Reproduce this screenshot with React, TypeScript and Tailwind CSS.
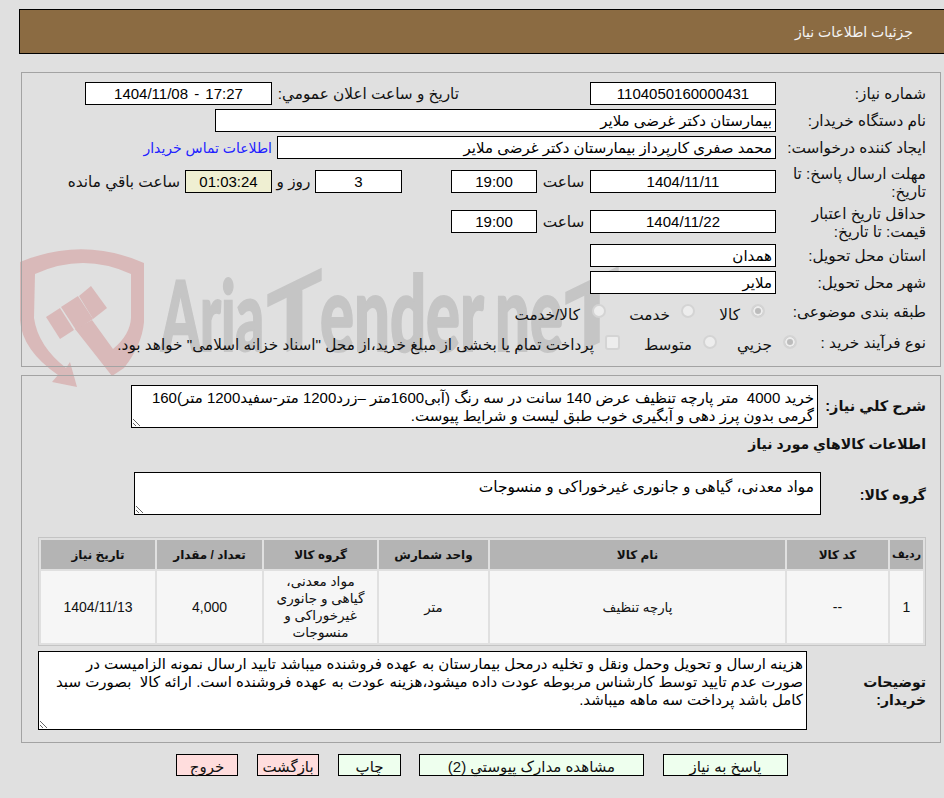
const field = 'h-[23px] shrink-0 border border-black px-[3px] text-[15px] leading-[21px] text-black outline-none';
const box = `${field} bg-white`;
const area = 'block shrink-0 resize border border-black bg-white px-[3px] leading-[18px] text-black outline-none';
const radio = 'm-0 size-[14px] shrink-0 appearance-none rounded-full border-2 border-[#d4d4d4] bg-[#ededed] checked:bg-[#bcbcbc] checked:shadow-[inset_0_0_0_2px_#ededed]';
const btn = 'h-[22px] shrink-0 border border-black text-[15px] leading-[20px] text-[#111]';
const label = 'w-[136px] shrink-0 whitespace-nowrap pt-[2px]';
const label2 = 'w-[136px] shrink-0 pt-[4px] leading-[18px]';

function Watermark() {
  return (
    <svg className="absolute left-0 top-0 z-0 [direction:ltr]" width="944" height="798" viewBox="0 0 944 798" aria-hidden="true">
      <g fill="#d9b9b9">
        <path d="M20 262 Q83 236 144 263 L144 322 Q142 345 124 368 L112 376 L75 329 L92 320 L113 349 Q130 335 131 318 L131 274 Q83 252 35 274 L34 318 Q38 346 66 368 L70 362 L77 387 L52 382 L58 375 Q22 350 20 320 Z" />
        <path d="M46 317 L60 308 L74 330 L60 339 Z" />
        <path d="M61 307 L78 296 L93 319 L76 330 Z" />
        <path d="M79 296 L91 286 L107 308 L93 319 Z" />
      </g>
      <g fill="#c5c5c5" stroke="#c5c5c5" strokeWidth="2" fontFamily="Lato, sans-serif" fontWeight="900">
        <text x="161" y="351" fontSize="98" textLength="103" lengthAdjust="spacingAndGlyphs">Aria</text>
        <text x="267" y="350" transform="skewY(-26) translate(0 141)" fontSize="90" textLength="55" lengthAdjust="spacingAndGlyphs">T</text>
        <text x="320" y="351" fontSize="104" textLength="164" lengthAdjust="spacingAndGlyphs">ender</text>
        <text x="495" y="351" fontSize="104" textLength="68" lengthAdjust="spacingAndGlyphs">ne</text>
        <text x="565" y="346" transform="skewY(-26) translate(0 288)" fontSize="90" textLength="54" lengthAdjust="spacingAndGlyphs">T</text>
      </g>
    </svg>
  );
}

function Radio({ checked }: { checked?: boolean }) {
  return <input type="radio" disabled defaultChecked={checked} className={radio} />;
}

function FormPanel() {
  return (
    <section className="mt-[18px] h-[295px] border border-[#a3a3a3] pt-[9px] pr-[14px] text-[15.3px] text-[#111]">
      <div className="flex h-[23px] items-center">
        <span className={label}>شماره نیاز:</span>
        <input readOnly value="1104050160000431" className={`${box} mr-[14px] w-[186px] text-center`} />
        <span className="mr-[131px] w-[181px] shrink-0 whitespace-nowrap pt-[2px]">تاریخ و ساعت اعلان عمومي:</span>
        <input readOnly value="1404/11/08 - 17:27" dir="ltr" className={`${box} mr-[6px] w-[187px] text-center [word-spacing:2px]`} />
      </div>
      <div className="mt-[4px] flex h-[23px] items-center">
        <span className={label}>نام دستگاه خریدار:</span>
        <input readOnly value="بیمارستان دکتر غرضی ملایر" className={`${box} mr-[14px] w-[561px]`} />
      </div>
      <div className="mt-[4px] flex h-[23px] items-center">
        <span className={label}>ایجاد کننده درخواست:</span>
        <input readOnly value="محمد صفری کارپرداز بیمارستان دکتر غرضی ملایر" className={`${box} mr-[14px] w-[499px]`} />
        <a className="mr-[5px] whitespace-nowrap pt-[2px] text-[14px] text-[#2222ff]">اطلاعات تماس خریدار</a>
      </div>
      <div className="mt-[4px] flex h-[36px] items-center">
        <span className={label2}>مهلت ارسال پاسخ: تا تاریخ:</span>
        <input readOnly value="1404/11/11" className={`${box} mr-[14px] w-[186px] text-center`} />
        <span className="w-[53px] shrink-0 pt-[2px] text-center">ساعت</span>
        <input readOnly value="19:00" className={`${box} w-[86px] text-center`} />
        <input readOnly value="3" className={`${box} mr-[49px] w-[87px] text-center`} />
        <span className="w-[43px] shrink-0 pt-[2px] text-center">روز و</span>
        <input readOnly value="01:03:24" className={`${field} w-[87px] bg-[#efefd2] text-center`} />
        <span className="mr-[5px] whitespace-nowrap pt-[2px]">ساعت باقي مانده</span>
      </div>
      <div className="mt-[4px] flex h-[36px] items-center">
        <span className={label2}>حداقل تاریخ اعتبار قیمت: تا تاریخ:</span>
        <input readOnly value="1404/11/22" className={`${box} mr-[14px] w-[186px] text-center`} />
        <span className="w-[53px] shrink-0 pt-[2px] text-center">ساعت</span>
        <input readOnly value="19:00" className={`${box} w-[86px] text-center`} />
      </div>
      <div className="mt-[5px] flex h-[23px] items-center">
        <span className={label}>استان محل تحویل:</span>
        <input readOnly value="همدان" className={`${box} mr-[14px] w-[186px]`} />
      </div>
      <div className="mt-[4px] flex h-[23px] items-center">
        <span className={label}>شهر محل تحویل:</span>
        <input readOnly value="ملایر" className={`${box} mr-[14px] w-[186px]`} />
      </div>
      <div className="mt-[6px] flex h-[22px] items-center">
        <span className={label}>طبقه بندی موضوعی:</span>
        <span className="mr-[25px] flex"><Radio checked /></span>
        <span className="mr-[11px] w-[20px] shrink-0 whitespace-nowrap pt-[8px]">کالا</span>
        <span className="mr-[25px] flex"><Radio /></span>
        <span className="mr-[11px] w-[40px] shrink-0 whitespace-nowrap pt-[8px]">خدمت</span>
        <span className="mr-[24px] flex"><Radio /></span>
        <span className="mr-[12px] whitespace-nowrap pt-[8px]">کالا/خدمت</span>
      </div>
      <div className="mt-[9px] flex h-[22px] items-center">
        <span className="w-[129px] shrink-0 whitespace-nowrap pt-[2px]">نوع فرآیند خرید :</span>
        <span className="flex"><Radio checked /></span>
        <span className="mr-[11px] w-[35px] shrink-0 whitespace-nowrap pt-[6px]">جزيي</span>
        <span className="mr-[20px] flex"><Radio /></span>
        <span className="mr-[11px] w-[46px] shrink-0 whitespace-nowrap pt-[6px]">متوسط</span>
        <input type="checkbox" disabled className="m-0 mr-[26px] size-[15px] shrink-0 appearance-none rounded-[3px] border-2 border-[#d4d4d4] bg-[#ededed]" />
        <span className="mr-[11px] whitespace-nowrap pt-[6px]">پرداخت تمام یا بخشی از مبلغ خرید،از محل "اسناد خزانه اسلامی" خواهد بود.</span>
      </div>
    </section>
  );
}

const columns = [
  { title: 'ردیف', width: 'w-[33px] text-[11px]' },
  { title: 'کد کالا', width: 'w-[101px] text-[12px]' },
  { title: 'نام کالا', width: 'w-[295px] text-[12px]' },
  { title: 'واحد شمارش', width: 'w-[109px] text-[12px]' },
  { title: 'گروه کالا', width: 'w-[113px] text-[12px]' },
  { title: 'تعداد / مقدار', width: 'w-[105px] text-[12px]' },
  { title: 'تاریخ نیاز', width: 'w-[114px] text-[12px]' },
];

function ItemsTable() {
  const cell = 'bg-[#f6f6f6] text-center align-middle leading-[17px] text-[#111]';
  return (
    <table className="mt-[22px] w-[888px] table-fixed border-separate border-spacing-[2px] border border-[#c4c4c4]">
      <thead>
        <tr>
          {columns.map((c) => (
            <th key={c.title} className={`${c.width} h-[29px] whitespace-nowrap bg-[#b4b4b4] p-0 text-center font-bold text-[#111]`}>
              {c.title}
            </th>
          ))}
        </tr>
      </thead>
      <tbody>
        <tr>
          <td className={`${cell} h-[72px] text-[14px]`}>1</td>
          <td className={`${cell} text-[14px]`}>--</td>
          <td className={`${cell} text-[13.33px]`}>پارچه تنظیف</td>
          <td className={`${cell} text-[13.33px]`}>متر</td>
          <td className={`${cell} px-[6px] text-[13.6px]`}>مواد معدنی، گیاهی و جانوری غیرخوراکی و منسوجات</td>
          <td className={`${cell} text-[14px]`}>4,000</td>
          <td className={`${cell} text-[14px]`}>1404/11/13</td>
        </tr>
      </tbody>
    </table>
  );
}

function DetailsPanel() {
  return (
    <section className="mt-[8px] h-[368px] border border-[#a3a3a3] pt-[9px] pr-[14px] text-[#111]">
      <div className="flex items-center">
        <span className="w-[108px] shrink-0 whitespace-nowrap text-[14.5px] font-bold">شرح کلي نیاز:</span>
        <textarea
          readOnly
          className={`${area} h-[43px] w-[687px] pt-[3px] text-[15px]`}
          defaultValue="خرید 4000  متر پارچه تنظیف عرض 140 سانت در سه رنگ (آبی1600متر –زرد1200 متر-سفید1200 متر)160 گرمی بدون پرز دهی و آبگیری خوب طبق لیست و شرایط پیوست."
        />
      </div>
      <h3 className="mt-[6px] h-[20px] text-[14px] font-bold leading-[20px]">اطلاعات کالاهاي مورد نیاز</h3>
      <div className="mt-[18px] flex items-center">
        <span className="w-[105px] shrink-0 pt-[3px] text-[14px] font-bold">گروه کالا:</span>
        <textarea readOnly className={`${area} h-[43px] w-[687px] pr-[6px] pt-[5px] text-[15.4px]`} defaultValue="مواد معدنی، گیاهی و جانوری غیرخوراکی و منسوجات" />
      </div>
      <ItemsTable />
      <div className="mt-[5px] flex items-center">
        <span className="w-[119px] shrink-0 pl-[30px] text-[14px] font-bold leading-[18px]">توضیحات خریدار:</span>
        <textarea
          readOnly
          className={`${area} h-[79px] w-[769px] pt-[3px] text-[15px]`}
          defaultValue="هزینه ارسال و تحویل وحمل ونقل و تخلیه درمحل بیمارستان به عهده فروشنده میباشد تایید ارسال نمونه الزامیست در صورت عدم تایید توسط کارشناس مربوطه عودت داده میشود،هزینه عودت به عهده فروشنده است. ارائه کالا  بصورت سبد کامل باشد پرداخت سه ماهه میباشد."
        />
      </div>
    </section>
  );
}

export default function App() {
  return (
    <div dir="rtl" className="relative h-[798px] w-[944px] overflow-hidden bg-[#e0e0e0] font-['Liberation_Sans','DejaVu_Sans',sans-serif]">
      <Watermark />
      <div className="relative z-10 pt-[9px] pl-[21px] pr-[3px]">
        <header className="-ml-[2px] -mr-[3px] h-[45px] border-y border-l border-black bg-[#8b6b42] pr-[31px] text-[14px] leading-[44px] text-[#f4f4f4]">
          جزئیات اطلاعات نیاز
        </header>
        <FormPanel />
        <DetailsPanel />
        <div className="mt-[11px] flex gap-[19px] pr-[153px]">
          <button className={`${btn} w-[125px] bg-[#eeffee] pt-[2px]`}>پاسخ به نیاز</button>
          <button className={`${btn} w-[225px] bg-[#eeffee] pt-[2px]`}>مشاهده مدارک پیوستي (2)</button>
          <button className={`${btn} -mr-px w-[63px] bg-[#eeffee] pt-[2px]`}>چاپ</button>
          <button className={`${btn} w-[62px] bg-[#ffdddd] pt-[2px]`}>بازگشت</button>
          <button className={`${btn} w-[62px] bg-[#ffdddd] pt-[2px]`}>خروج</button>
        </div>
      </div>
    </div>
  );
}
